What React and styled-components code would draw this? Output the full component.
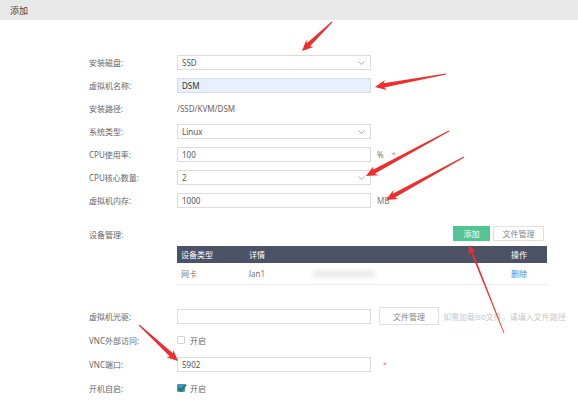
import React from "react";
import styled, { createGlobalStyle } from "styled-components";

const GlobalStyle = createGlobalStyle`
  html, body {
    margin: 0;
    padding: 0;
    background: #fff;
  }
  body {
    font-family: "Noto Sans", "Noto Sans CJK SC", sans-serif;
    font-size: 8px;
    color: #666;
  }
`;

const arrows = [
  { from: [332, 22], to: [302, 51] },
  { from: [446, 74], to: [375, 87] },
  { from: [449, 131], to: [366, 176] },
  { from: [464, 157], to: [386, 200] },
  { from: [504, 333], to: [469, 245], thin: true },
  { from: [139, 325], to: [178, 361] },
];

const arrowPoints = ({ from, to, thin }) => {
  const [tx, ty] = from;
  const [hx, hy] = to;
  const len = Math.hypot(hx - tx, hy - ty);
  const dx = (hx - tx) / len;
  const dy = (hy - ty) / len;
  const nx = -dy;
  const ny = dx;
  const L = thin ? 9 : 11;
  const W = thin ? 4 : 5;
  const w0 = thin ? 0.4 : 0.5;
  const w1 = thin ? 1 : 2.2;
  const bx = hx - dx * L;
  const by = hy - dy * L;
  const nb = 2;
  const pts = [
    [tx + nx * w0, ty + ny * w0],
    [bx + dx * nb + nx * w1, by + dy * nb + ny * w1],
    [bx + nx * W, by + ny * W],
    [hx, hy],
    [bx - nx * W, by - ny * W],
    [bx + dx * nb - nx * w1, by + dy * nb - ny * w1],
    [tx - nx * w0, ty - ny * w0],
  ];
  return pts.map((p) => p.map((v) => v.toFixed(1)).join(",")).join(" ");
};

const Page = styled.div`
  position: relative;
  width: 578px;
  height: 408px;
  overflow: hidden;
`;

const Header = styled.div`
  height: 20px;
  background: #e8e8e8;
  padding-left: 10px;
  display: flex;
  align-items: center;
  font-size: 9px;
  color: #444;
`;

const Form = styled.div`
  padding: 31px 0 0 89px;
`;

const Row = styled.div`
  display: grid;
  grid-template-columns: 88px 194px auto;
  align-items: center;
  height: ${(p) => p.$h || 23}px;
`;

const Label = styled.div`
  color: #666;
  white-space: nowrap;
`;

const Field = styled.div`
  position: relative;
  box-sizing: border-box;
  height: ${(p) => p.$h || 15}px;
  border: 1px solid ${(p) => (p.$filled ? "#d6dce8" : "#dcdcdc")};
  background: ${(p) => (p.$filled ? "#e8f0fe" : "#fff")};
  padding-left: 4px;
  display: flex;
  align-items: center;
  color: ${(p) => (p.$filled ? "#333" : "#555")};
`;

const Chevron = styled.svg`
  position: absolute;
  right: 5px;
  top: 50%;
  margin-top: -2px;
`;

const Plain = styled.div`
  color: #666;
`;

const After = styled.div`
  display: flex;
  align-items: center;
  padding-left: ${(p) => p.$pl || 6}px;
  color: #777;
  white-space: nowrap;
`;

const Star = styled.span`
  color: #f27272;
  margin-left: ${(p) => p.$ml || 6}px;
  font-size: 7px;
`;

const DeviceBlock = styled.div`
  display: grid;
  grid-template-columns: 88px 370px;
  margin-top: 14px;
`;

const DeviceLabel = styled(Label)`
  height: 15px;
  line-height: 15px;
  margin-top: 1px;
`;

const Toolbar = styled.div`
  display: flex;
  justify-content: flex-end;
  gap: 3px;
  padding-right: 3px;
  height: 15px;
`;

const Button = styled.div`
  box-sizing: border-box;
  height: ${(p) => p.$h || 15}px;
  width: ${(p) => p.$w}px;
  display: flex;
  align-items: center;
  justify-content: center;
  background: ${(p) => (p.$primary ? "#55c494" : "#fff")};
  border: 1px solid ${(p) => (p.$primary ? "#55c494" : "#e0e0e0")};
  color: ${(p) => (p.$primary ? "#fff" : "#888")};
`;

const Table = styled.div`
  margin-top: 5px;
`;

const TRow = styled.div`
  display: grid;
  grid-template-columns: 68px 1fr 36px;
  align-items: center;
  height: ${(p) => (p.$head ? 17 : 21)}px;
  padding-left: 4px;
  background: ${(p) => (p.$head ? "#4b5266" : "#fff")};
  color: ${(p) => (p.$head ? "#fff" : "#777")};
  border-bottom: ${(p) => (p.$head ? "none" : "1px solid #eaeaea")};
`;

const Detail = styled.div`
  display: flex;
  align-items: center;
`;

const Blurred = styled.span`
  display: inline-block;
  width: 62px;
  height: 8px;
  margin-left: 48px;
  background: #ececec;
  filter: blur(2px);
`;

const Link = styled.span`
  color: #3a8ee6;
`;

const Hint = styled.span`
  margin-left: 4px;
  color: #c8c8c8;
`;

const CdBlock = styled.div`
  margin-top: 19px;
`;

const Check = styled.label`
  display: flex;
  align-items: center;
  gap: 5px;
  color: #666;
`;

const Box = styled.span`
  box-sizing: border-box;
  width: 8px;
  height: 8px;
  border: 1px solid ${(p) => (p.$on ? "#3d8fd9" : "#d4d4d4")};
  background: ${(p) => (p.$on ? "#3d8fd9" : "#fff")};
  position: relative;
  border-radius: 1px;
`;

const Tick = styled.svg`
  position: absolute;
  left: -1px;
  top: -2px;
`;

const Overlay = styled.svg`
  position: absolute;
  left: 0;
  top: 0;
  pointer-events: none;
`;

const Select = ({ value }) => (
  <Field>
    {value}
    <Chevron width="7" height="4" viewBox="0 0 7 4">
      <path d="M0.5 0.5 L3.5 3.5 L6.5 0.5" fill="none" stroke="#999" strokeWidth="0.8" />
    </Chevron>
  </Field>
);

const CheckBox = ({ on, text }) => (
  <Check>
    <Box $on={on}>
      {on && (
        <Tick width="10" height="10" viewBox="0 0 10 10">
          <path d="M1.5 5 L4 7.5 L9 1.5" fill="none" stroke="#1f7a2a" strokeWidth="1.8" />
        </Tick>
      )}
    </Box>
    {text}
  </Check>
);

export default function App() {
  return (
    <Page>
      <GlobalStyle />
      <Header>添加</Header>
      <Form>
        <Row>
          <Label>安装磁盘:</Label>
          <Select value="SSD" />
        </Row>
        <Row>
          <Label>虚拟机名称:</Label>
          <Field $filled>DSM</Field>
        </Row>
        <Row>
          <Label>安装路径:</Label>
          <Plain>/SSD/KVM/DSM</Plain>
        </Row>
        <Row>
          <Label>系统类型:</Label>
          <Select value="Linux" />
        </Row>
        <Row>
          <Label>CPU使用率:</Label>
          <Field>100</Field>
          <After>
            %<Star $ml={8}>*</Star>
          </After>
        </Row>
        <Row>
          <Label>CPU核心数量:</Label>
          <Select value="2" />
        </Row>
        <Row>
          <Label>虚拟机内存:</Label>
          <Field>1000</Field>
          <After>MB</After>
        </Row>

        <DeviceBlock>
          <DeviceLabel>设备管理:</DeviceLabel>
          <div>
            <Toolbar>
              <Button $primary $w={37}>添加</Button>
              <Button $w={51}>文件管理</Button>
            </Toolbar>
            <Table>
              <TRow $head>
                <span>设备类型</span>
                <span>详情</span>
                <span>操作</span>
              </TRow>
              <TRow>
                <span>网卡</span>
                <Detail>
                  lan1
                  <Blurred />
                </Detail>
                <Link>删除</Link>
              </TRow>
            </Table>
          </div>
        </DeviceBlock>

        <CdBlock>
          <Row $h={24}>
            <Label>虚拟机光驱:</Label>
            <Field />
            <After $pl={8}>
              <Button $w={60} $h={18}>文件管理</Button>
              <Hint>如需加载iso文件，请填入文件路径</Hint>
            </After>
          </Row>
          <Row $h={24}>
            <Label>VNC外部访问:</Label>
            <CheckBox text="开启" />
          </Row>
          <Row $h={24}>
            <Label>VNC端口:</Label>
            <Field>5902</Field>
            <After>
              <Star $ml={0}>*</Star>
            </After>
          </Row>
          <Row $h={24}>
            <Label>开机自启:</Label>
            <CheckBox on text="开启" />
          </Row>
        </CdBlock>
      </Form>

      <Overlay width="578" height="408" viewBox="0 0 578 408">
        {arrows.map((a, i) => (
          <polygon key={i} points={arrowPoints(a)} fill="#f02c2c" />
        ))}
      </Overlay>
    </Page>
  );
}
